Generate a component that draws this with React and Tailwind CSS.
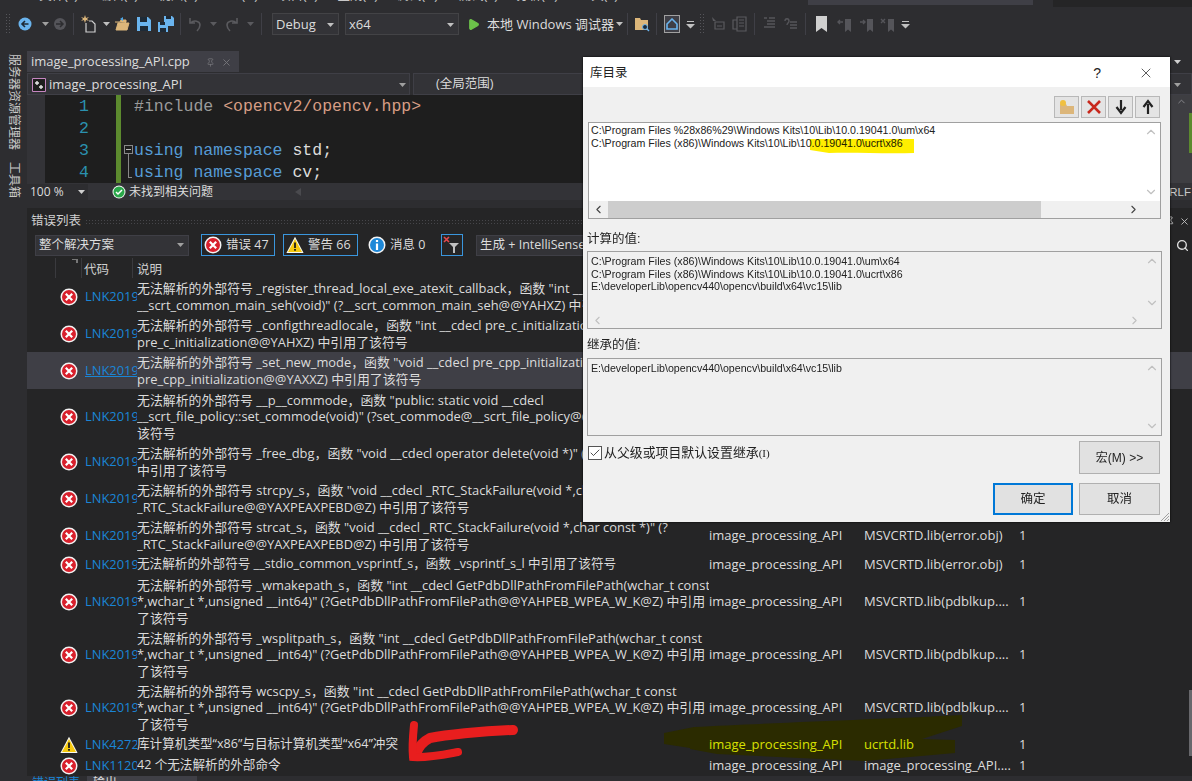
import React from "react";
import { ChevronUp, ChevronDown, ChevronLeft, ChevronRight, Search, Pin, X, Play, Check } from "lucide-react";

const ui = { fontFamily: '"Open Sans","Noto Sans CJK SC",sans-serif' };
const dlg = { fontFamily: '"Liberation Sans","Noto Sans CJK SC",sans-serif' };
const mono = { fontFamily: '"Liberation Mono","Noto Sans CJK SC",monospace' };

const ErrorIcon = ({ s = 18 }) => (
  <svg width={s} height={s} viewBox="0 0 18 18" className="shrink-0">
    <circle cx="9" cy="9" r="8.5" fill="#f4f4f4" />
    <circle cx="9" cy="9" r="7" fill="#d8202c" />
    <path d="M5.8 5.8l6.4 6.4M12.2 5.8l-6.4 6.4" stroke="#fff" strokeWidth="2.2" />
  </svg>
);
const WarnIcon = ({ s = 18 }) => (
  <svg width={s} height={s} viewBox="0 0 18 18" className="shrink-0">
    <path d="M9 .8L17.6 17H.4z" fill="#f8f8f0" />
    <path d="M9 3L16 16H2z" fill="#f6c90e" />
    <path d="M9 6.5v5.5M9 13v1.8" stroke="#1e1e1e" strokeWidth="1.8" />
  </svg>
);
const InfoIcon = () => (
  <svg width="18" height="18" viewBox="0 0 18 18" className="shrink-0">
    <circle cx="9" cy="9" r="8.5" fill="#f4f4f4" />
    <circle cx="9" cy="9" r="7" fill="#1e88d8" />
    <path d="M9 4v2M9 7.5V14" stroke="#fff" strokeWidth="2.2" />
  </svg>
);
const Caret = ({ c = "#a0a0a0" }) => (
  <svg width="7" height="4" viewBox="0 0 7 4" className="shrink-0"><path d="M0 0h7L3.5 4z" fill={c} /></svg>
);
const Sep = () => <div className="mx-[3px] h-[22px] w-px shrink-0 bg-[#3f3f46]" />;
const Grip = () => (
  <div className="h-[22px] w-[5px] shrink-0 bg-[radial-gradient(#55555a_1px,transparent_1px)] bg-[length:3px_3px]" />
);
const Overflow = () => (
  <svg width="9" height="9" viewBox="0 0 9 9" className="shrink-0"><path d="M1 1h7v1H1zM0 4h9L4.5 8.5z" fill="#c0c0c0" /></svg>
);
const Slot = ({ w, children }) => (
  <div className="flex h-[22px] shrink-0 items-center justify-center" style={{ width: w }}>{children}</div>
);

const FolderOpen = () => (
  <svg width="16" height="16" viewBox="0 0 16 16"><path d="M1 6h5l1-2h5v3H4l-2 7h11l2-7h-2" fill="#dcb67a" stroke="#dcb67a" /><path d="M6 3l3-2v4z" fill="#4fa8e8" /></svg>
);
const Save = () => (
  <svg width="14" height="14" viewBox="0 0 14 14"><path d="M0 0h11l3 3v11H0z" fill="#6ab4ee" /><path d="M3 0h7v5H3zM3 9h8v5H3z" fill="#1e2a36" /></svg>
);
const SaveAll = () => (
  <svg width="16" height="16" viewBox="0 0 16 16"><path d="M6 0h8l2 2v8H6z" fill="#6ab4ee" /><path d="M8 0h5v3H8z" fill="#1e2a36" /><path d="M0 6h8l2 2v8H0z" fill="#6ab4ee" /><path d="M2 6h5v3H2zM2 12h6v4H2z" fill="#1e2a36" /></svg>
);
const Undo = ({ flip }) => (
  <svg width="15" height="15" viewBox="0 0 15 15" className={flip ? "-scale-x-100" : ""}><path d="M2 1v5h5M2.5 6C6 2.5 12 4 12 8c0 2-1 4-3 6" fill="none" stroke="#5a5a5e" strokeWidth="1.6" /></svg>
);

const rows = [
  ["e", ['无法解析的外部符号 _register_thread_local_exe_atexit_callback，函数 "int __cdecl', '__scrt_common_main_seh(void)" (?__scrt_common_main_seh@@YAHXZ) 中引用了该符号'], "MSVCRTD.lib(exe_main.obj)"],
  ["e", ['无法解析的外部符号 _configthreadlocale，函数 "int __cdecl pre_c_initialization(void)" (?', 'pre_c_initialization@@YAHXZ) 中引用了该符号'], "MSVCRTD.lib(exe_main.obj)"],
  ["e", ['无法解析的外部符号 _set_new_mode，函数 "void __cdecl pre_cpp_initialization(void)" (?', 'pre_cpp_initialization@@YAXXZ) 中引用了该符号'], "MSVCRTD.lib(exe_main.obj)", true],
  ["e", ['无法解析的外部符号 __p__commode，函数 "public: static void __cdecl', '__scrt_file_policy::set_commode(void)" (?set_commode@__scrt_file_policy@@SAXXZ) 中引用了', '该符号'], "MSVCRTD.lib(exe_main.obj)", false, true],
  ["e", ['无法解析的外部符号 _free_dbg，函数 "void __cdecl operator delete(void *)" (??3@YAXPEAX@Z)', '中引用了该符号'], "MSVCRTD.lib(delete.obj)"],
  ["e", ['无法解析的外部符号 strcpy_s，函数 "void __cdecl _RTC_StackFailure(void *,char const *)" (?', '_RTC_StackFailure@@YAXPEAXPEBD@Z) 中引用了该符号'], "MSVCRTD.lib(error.obj)"],
  ["e", ['无法解析的外部符号 strcat_s，函数 "void __cdecl _RTC_StackFailure(void *,char const *)" (?', '_RTC_StackFailure@@YAXPEAXPEBD@Z) 中引用了该符号'], "MSVCRTD.lib(error.obj)"],
  ["e", ['无法解析的外部符号 __stdio_common_vsprintf_s，函数 _vsprintf_s_l 中引用了该符号'], "MSVCRTD.lib(error.obj)"],
  ["e", ['无法解析的外部符号 _wmakepath_s，函数 "int __cdecl GetPdbDllPathFromFilePath(wchar_t const', '*,wchar_t *,unsigned __int64)" (?GetPdbDllPathFromFilePath@@YAHPEB_WPEA_W_K@Z) 中引用', '了该符号'], "MSVCRTD.lib(pdblkup...."],
  ["e", ['无法解析的外部符号 _wsplitpath_s，函数 "int __cdecl GetPdbDllPathFromFilePath(wchar_t const', '*,wchar_t *,unsigned __int64)" (?GetPdbDllPathFromFilePath@@YAHPEB_WPEA_W_K@Z) 中引用', '了该符号'], "MSVCRTD.lib(pdblkup...."],
  ["e", ['无法解析的外部符号 wcscpy_s，函数 "int __cdecl GetPdbDllPathFromFilePath(wchar_t const', '*,wchar_t *,unsigned __int64)" (?GetPdbDllPathFromFilePath@@YAHPEB_WPEA_W_K@Z) 中引用', '了该符号'], "MSVCRTD.lib(pdblkup...."],
  ["w", ['库计算机类型“x86”与目标计算机类型“x64”冲突'], "ucrtd.lib"],
  ["e", ['42 个无法解析的外部命令'], "image_processing_API...."],
];
const rowH = { 1: "h-[21px]", 2: "h-[37px]", 3: "h-[53px]" };

function Row({ r }) {
  const [kind, lines, file, selected, nudge] = r;
  const warn = kind === "w";
  const code = warn ? "LNK4272" : lines.length === 1 && file.startsWith("image") ? "LNK1120" : "LNK2019";
  return (
    <div className={`relative z-10 flex items-center text-[12.9px] text-[#dcdcdc] ${rowH[lines.length]} ${selected ? "bg-[#3f3f46]" : ""} ${nudge ? "mt-[1px]" : ""}`}>
      <div className="flex w-[51px] shrink-0 justify-end">
        <div className="flex w-[18px] justify-center">{warn ? <WarnIcon /> : <ErrorIcon />}</div>
      </div>
      <div className={`w-[59px] shrink-0 overflow-hidden whitespace-nowrap pl-[7px] text-[#1a85d6] ${selected ? "underline" : ""}`}>{code}</div>
      <div className={`w-[572px] shrink-0 overflow-hidden leading-[16.5px] ${lines.length === 1 ? "text-[12.6px]" : ""}`}>
        {lines.map((l, i) => <div key={i} className="whitespace-nowrap">{l}</div>)}
      </div>
      <div className={`w-[155px] shrink-0 text-[13px] ${warn ? "text-[#d8e000]" : ""}`}>image_processing_API</div>
      <div className={`w-[155px] shrink-0 overflow-hidden whitespace-nowrap text-[13px] ${warn ? "text-[#d8e000]" : ""}`}>{file}</div>
      <div>1</div>
    </div>
  );
}

const ToolBtn = ({ children }) => (
  <div className="flex h-[22px] w-[25px] items-center justify-center border border-[#b8b8b8] bg-[#e4e4e4]">{children}</div>
);
const VBar = () => (
  <div className="flex w-[18px] shrink-0 flex-col items-center justify-between bg-[#f0f0f0] py-[2px]">
    <ChevronUp size={14} className="text-[#c0c0c0]" />
    <ChevronDown size={14} className="text-[#c0c0c0]" />
  </div>
);

function Dialog() {
  return (
    <div className="absolute left-[583px] top-[57px] z-30 flex h-[465px] w-[587px] flex-col bg-[#f0f0f0] text-[#222] shadow-[0_0_2px_#000]" style={dlg}>
      <div className="flex h-[30px] shrink-0 items-center bg-white pl-[7px] pt-[2px] text-[12.5px]">
        <span className="flex-1">库目录</span>
        <span className="mr-[37px] text-[14px]">?</span>
        <X size={16} strokeWidth={1.2} className="mr-[16px] text-[#333]" />
      </div>
      <div className="flex justify-end gap-[2px] pr-[10px] pt-[9px]">
        <ToolBtn>
          <svg width="18" height="16" viewBox="0 0 18 16"><path d="M2 5h6l1 2h7v8H2z" fill="#dcb67a" /><circle cx="5" cy="4" r="3" fill="#f0c040" /></svg>
        </ToolBtn>
        <ToolBtn>
          <svg width="16" height="16" viewBox="0 0 16 16"><path d="M2 2l12 12M14 2L2 14" stroke="#c8281c" strokeWidth="2.6" /></svg>
        </ToolBtn>
        <ToolBtn>
          <svg width="14" height="16" viewBox="0 0 14 16"><path d="M7 1v10M2.5 8L7 14l4.5-6" fill="none" stroke="#222" strokeWidth="2.2" /></svg>
        </ToolBtn>
        <ToolBtn>
          <svg width="14" height="16" viewBox="0 0 14 16"><path d="M7 15V5M2.5 8L7 2l4.5 6" fill="none" stroke="#222" strokeWidth="2.2" /></svg>
        </ToolBtn>
      </div>
      <div className="relative ml-[5px] mr-[9px] mt-[4px] flex h-[97px] flex-col border border-[#a0a0a0] bg-white">
        <div className="flex min-h-0 flex-1">
          <div className="flex-1 pl-[2px] pt-[1px] text-[10.65px] leading-[13px]">
            <div>C:\Program Files %28x86%29\Windows Kits\10\Lib\10.0.19041.0\um\x64</div>
            <div>C:\Program Files (x86)\Windows Kits\10\Lib\10.0.19041.0\ucrt\x86</div>
          </div>
          <div className="flex w-[18px] shrink-0 flex-col items-center justify-between py-[2px]">
            <ChevronUp size={14} className="text-[#c0c0c0]" />
            <ChevronDown size={14} className="text-[#c0c0c0]" />
          </div>
        </div>
        <div className="flex h-[17px] shrink-0 items-center bg-[#f0f0f0]">
          <ChevronLeft size={13} className="mx-[3px] shrink-0 text-[#444]" />
          <div className="h-full w-[433px] bg-[#cdcdcd]" />
          <div className="flex-1" />
          <ChevronRight size={13} className="mr-[20px] shrink-0 text-[#444]" />
        </div>
        <svg className="pointer-events-none absolute left-[220px] top-[13px] mix-blend-multiply" width="108" height="18" viewBox="0 0 108 18">
          <path d="M1 3h104v14c-30 1-60-1-85 0L1 14z" fill="#ffee00" />
        </svg>
      </div>
      <div className="pl-[4px] pt-[11px] text-[12.5px] leading-[18px]">计算的值:</div>
      <div className="ml-[4px] mr-[8px] mt-[3px] flex h-[78px] flex-col border border-[#a0a0a0] bg-[#f0f0f0]">
        <div className="flex min-h-0 flex-1">
          <div className="flex-1 pl-[3px] pt-[3px] text-[10.65px] leading-[12.5px]">
            <div>C:\Program Files (x86)\Windows Kits\10\Lib\10.0.19041.0\um\x64</div>
            <div>C:\Program Files (x86)\Windows Kits\10\Lib\10.0.19041.0\ucrt\x86</div>
            <div>E:\developerLib\opencv440\opencv\build\x64\vc15\lib</div>
          </div>
          <VBar />
        </div>
        <div className="flex h-[16px] shrink-0 items-center">
          <ChevronLeft size={13} className="mx-[3px] shrink-0 text-[#c0c0c0]" />
          <div className="flex-1" />
          <ChevronRight size={13} className="mr-[20px] shrink-0 text-[#c0c0c0]" />
        </div>
      </div>
      <div className="pl-[4px] pt-[7px] text-[12.5px] leading-[18px]">继承的值:</div>
      <div className="ml-[4px] mr-[8px] mt-[4px] flex h-[78px] border border-[#a0a0a0] bg-[#f0f0f0]">
        <div className="flex-1 pl-[3px] pt-[3px] text-[10.65px] leading-[12.5px]">E:\developerLib\opencv440\opencv\build\x64\vc15\lib</div>
        <VBar />
      </div>
      <div className="flex items-start pl-[5px] pr-[10px] pt-[5px]">
        <div className="mt-[5px] flex h-[14px] w-[14px] items-center justify-center border border-[#555] bg-white">
          <Check size={12} strokeWidth={1.6} className="text-[#222]" />
        </div>
        <div className="ml-[2px] mt-[3px] flex-1 text-[12.9px] leading-[18px]">从父级或项目默认设置继承<span className="text-[11px]" style={{ fontFamily: '"Liberation Serif",serif' }}>(I)</span></div>
        <div className="flex h-[33px] w-[81px] items-center justify-center border border-[#b0b0b0] bg-[#e1e1e1] text-[12px]">宏(M) &gt;&gt;</div>
      </div>
      <div className="flex justify-end gap-[6px] pr-[10px] pt-[9px]">
        <div className="flex h-[32px] w-[80px] items-center justify-center border-2 border-[#0078d7] bg-[#e1e1e1] text-[12.5px]">确定</div>
        <div className="flex h-[32px] w-[81px] items-center justify-center border border-[#b0b0b0] bg-[#e1e1e1] text-[12.5px]">取消</div>
      </div>
      <svg className="absolute bottom-[1px] right-[1px]" width="9" height="9" viewBox="0 0 9 9"><path d="M9 1L1 9M9 4L4 9M9 7L7 9" stroke="#a0a0a0" /></svg>
    </div>
  );
}

export default function App() {
  return (
    <div className="relative flex h-[781px] w-[1192px] flex-col overflow-hidden bg-[#2d2d30] text-[#dcdcdc]" style={ui}>
      {/* menu strip */}
      <div className="flex h-[7px] shrink-0 items-start overflow-hidden pl-[18px] text-[12.5px] leading-[14px] text-[#c8c8c8]">
        {["文件(F)", "编辑(E)", "视图(V)", "Git(G)", "项目(P)", "生成(B)", "调试(D)", "测试(S)", "分析(N)", "工具(T)"].map((m) => (
          <div key={m} className="-mt-[11px] flex w-[60px] shrink-0 justify-end whitespace-nowrap">{m}</div>
        ))}
        <div className="ml-[190px] h-[5px] w-[225px] shrink-0 bg-[#3f3f46]" />
        <div className="ml-[20px] h-[7px] flex-1 bg-[#252526]" />
      </div>

      {/* toolbar */}
      <div className="mt-[6px] flex h-[22px] shrink-0 items-center pl-[5px]">
        <Grip />
        <Slot w={30}>
          <svg width="16" height="16" viewBox="0 0 16 16"><circle cx="8" cy="8" r="6.5" fill="#6ab4ee" /><path d="M11.5 8h-6M8 5L5 8l3 3" fill="none" stroke="#1e2a36" strokeWidth="1.6" /></svg>
        </Slot>
        <Slot w={10}><Caret /></Slot>
        <Slot w={20}>
          <svg width="14" height="14" viewBox="0 0 14 14"><circle cx="7" cy="7" r="6" fill="#55555a" /><path d="M3 7h7M7 4l3 3-3 3" fill="none" stroke="#2d2d30" strokeWidth="1.5" /></svg>
        </Slot>
        <Sep />
        <Slot w={24}>
          <svg width="17" height="18" viewBox="0 0 17 18"><path d="M5 8v9h9V9l-3-3H8" fill="none" stroke="#d0d0d0" strokeWidth="1.2" /><path d="M4 0l1 3 3-1-2 2 2 2-3-1-1 3-1-3-3 1 2-2-2-2 3 1z" fill="#dcb67a" /></svg>
        </Slot>
        <Slot w={10}><Caret c="#c0c0c0" /></Slot>
        <Slot w={22}><FolderOpen /></Slot>
        <Slot w={22}><Save /></Slot>
        <Slot w={22}><SaveAll /></Slot>
        <Sep />
        <Slot w={22}><Undo /></Slot>
        <Slot w={14}><Caret c="#5a5a5e" /></Slot>
        <Slot w={22}><Undo flip /></Slot>
        <Slot w={16}><Caret c="#5a5a5e" /></Slot>
        <Sep />
        <div className="ml-[7px] flex h-[22px] w-[67px] shrink-0 items-center justify-between border border-[#434346] bg-[#333337] pl-[3px] pr-[4px] pt-[1px] text-[13px]">Debug<Caret c="#c0c0c0" /></div>
        <div className="ml-[6px] flex h-[22px] w-[114px] shrink-0 items-center justify-between border border-[#434346] bg-[#333337] pl-[3px] pr-[4px] pt-[1px] text-[13px]">x64<Caret c="#c0c0c0" /></div>
        <Slot w={28}><Play size={13} className="fill-[#6cc24a] text-[#6cc24a]" /></Slot>
        <div className="w-[127px] shrink-0 whitespace-nowrap pt-[1px] text-[13px]">本地 Windows 调试器</div>
        <Slot w={10}><Caret c="#c0c0c0" /></Slot>
        <Sep />
        <Slot w={22}>
          <svg width="16" height="16" viewBox="0 0 16 16"><path d="M1 2h5l1 2h7v10H1z" fill="#dcb67a" /><circle cx="11" cy="11" r="2.5" fill="#1e2a36" stroke="#6ab4ee" /><path d="M13 13l2 2" stroke="#6ab4ee" strokeWidth="1.5" /></svg>
        </Slot>
        <Sep />
        <Slot w={24}>
          <div className="flex h-[18px] w-[16px] items-center justify-center border border-[#a0a0a0] bg-[#3f3f46]">
            <svg width="12" height="12" viewBox="0 0 12 12"><path d="M6 1L1 6v5h10V6z" fill="none" stroke="#6ab4ee" strokeWidth="1.6" /></svg>
          </div>
        </Slot>
        <Slot w={12}><Overflow /></Slot>
        <Slot w={11}><Grip /></Slot>
        <Slot w={22}>
          <svg width="16" height="16" viewBox="0 0 16 16"><path d="M2 1l4 4H3z" fill="#5a5a5e" /><path d="M5 6h9v7H5z" fill="none" stroke="#5a5a5e" strokeWidth="1.2" /><path d="M7 10h5" stroke="#5a5a5e" /></svg>
        </Slot>
        <Slot w={22}>
          <svg width="16" height="16" viewBox="0 0 16 16"><path d="M5 1h9v14H5zM1 4h4v9H1z" fill="none" stroke="#5a5a5e" strokeWidth="1.2" /><path d="M7 4h5M7 7h5M7 10h5" stroke="#5a5a5e" /></svg>
        </Slot>
        <Sep />
        <Slot w={22}>
          <svg width="14" height="14" viewBox="0 0 14 14"><path d="M2 1h3M7 1h6M5 4h8M5 7h8M2 10h11" stroke="#55555a" strokeWidth="1.4" /></svg>
        </Slot>
        <Slot w={22}>
          <svg width="14" height="14" viewBox="0 0 14 14"><path d="M1 4c0-3 4-3 4 0 0 2-2 2-2 4M6 5h7M6 8h7M6 11h7" fill="none" stroke="#55555a" strokeWidth="1.4" /></svg>
        </Slot>
        <Sep />
        <Slot w={24}><svg width="13" height="16" viewBox="0 0 13 16"><path d="M1 0h11v16l-5.5-4L1 16z" fill="#d0d0d0" /></svg></Slot>
        <Slot w={22}>
          <svg width="15" height="15" viewBox="0 0 15 15"><path d="M8 2h6v13l-3-2.5L8 15z" fill="#55555a" /><path d="M6 5H1M3 3L1 5l2 2" fill="none" stroke="#55555a" strokeWidth="1.4" /></svg>
        </Slot>
        <Slot w={22}>
          <svg width="15" height="15" viewBox="0 0 15 15"><path d="M8 2h6v13l-3-2.5L8 15z" fill="#55555a" /><path d="M1 5h5M4 3l2 2-2 2" fill="none" stroke="#55555a" strokeWidth="1.4" /></svg>
        </Slot>
        <Slot w={20}>
          <svg width="15" height="15" viewBox="0 0 15 15"><path d="M8 2h6v13l-3-2.5L8 15z" fill="#55555a" /><path d="M1 2l4 4M5 2L1 6" stroke="#55555a" strokeWidth="1.4" /></svg>
        </Slot>
        <Slot w={16}><Overflow /></Slot>
      </div>

      <div className="mt-[16px] flex min-h-0 flex-1">
        {/* side rail */}
        <div className="flex w-[27px] shrink-0 flex-col items-center gap-[12px] pt-[3px] text-[12px] leading-[14px] text-[#c8c8c8]">
          <div className="whitespace-nowrap [text-orientation:sideways] [writing-mode:vertical-rl]">服务器资源管理器</div>
          <div className="whitespace-nowrap [text-orientation:sideways] [writing-mode:vertical-rl]">工具箱</div>
        </div>

        <div className="flex min-w-0 flex-1 flex-col">
          {/* doc tab */}
          <div className="flex h-[21px] shrink-0 items-center">
            <div className="flex h-full w-[212px] items-center bg-[#3f3f46] pl-[4px] pt-[1px] text-[13px]">
              <span className="flex-1 whitespace-nowrap">image_processing_API.cpp</span>
              <Pin size={9} className="mr-[6px] text-[#77777c]" />
              <X size={11} className="mr-[7px] text-[#77777c]" />
            </div>
            <div className="flex-1" />
            <div className="pr-[11px]"><Caret c="#d0d0d0" /></div>
          </div>
          {/* nav bar */}
          <div className="flex h-[23px] shrink-0 items-center gap-[3px] bg-[#2d2d30]">
            <div className="flex h-[22px] w-[383px] shrink-0 items-center border border-[#3f3f46] bg-[#333337] pl-[4px] pr-[3px] pt-[2px] text-[13px]">
              <svg width="14" height="14" viewBox="0 0 14 14" className="mr-[3px] shrink-0"><path d="M.5.5h13v13H.5z" fill="#1e1e1e" stroke="#c586c0" /><path d="M3 5h4M5 3v4M7 9h4M9 7v4" stroke="#e8e8e8" strokeWidth="1.4" /></svg>
              <span className="flex-1">image_processing_API</span>
              <Caret />
            </div>
            <div className="flex h-[22px] flex-1 items-center justify-between border border-[#3f3f46] bg-[#333337] pl-[22px] pr-[10px] pt-[2px] text-[12.5px]">(全局范围)<Caret c="#a0a0a0" /></div>
          </div>
          {/* editor */}
          <div className="flex h-[88px] shrink-0 overflow-hidden bg-[#1e1e1e] text-[16.5px] leading-[22px]" style={mono}>
            <div className="w-[18px] shrink-0 bg-[#333337]" />
            <div className="w-[71px] shrink-0 pt-[1px]">
              {[1, 2, 3, 4].map((n) => (
                <div key={n} className="pr-[27px] text-right text-[#2b91af]">{n}</div>
              ))}
            </div>
            <div className="w-[5px] shrink-0 bg-[#5c8a2e]" />
            <div className="relative flex-1 whitespace-pre pl-[13px] pt-[1px]">
              <div><span className="text-[#9b9b9b]">#include </span><span className="text-[#d69d85]">&lt;opencv2/opencv.hpp&gt;</span></div>
              <div>&nbsp;</div>
              <div><span className="text-[#569cd6]">using namespace </span><span className="text-[#dcdcdc]">std;</span></div>
              <div><span className="text-[#569cd6]">using namespace </span><span className="text-[#dcdcdc]">cv;</span></div>
              <div className="absolute left-[3px] top-[50px] flex h-[9px] w-[9px] items-center justify-center border border-[#888]"><div className="h-px w-[5px] bg-[#bbb]" /></div>
              <div className="absolute left-[7px] top-[59px] h-[24px] w-[4px] border-b border-l border-[#888]" />
            </div>
            <div className="flex w-[22px] shrink-0 flex-col items-center bg-[#3e3e42] pt-[1px]">
              <ChevronUp size={11} className="text-[#8a8a8e]" />
              <div className="mt-[6px] h-[40px] w-[3px] self-end bg-[#5c8a2e]" />
            </div>
          </div>
          {/* status */}
          <div className="flex h-[17px] shrink-0 items-center bg-[#333337] pt-[1px] text-[12px]">
            <div className="flex h-[17px] w-[61px] shrink-0 items-center justify-between bg-[#2d2d30] pl-[3px] pr-[3px]">100 %<Caret c="#d0d0d0" /></div>
            <svg width="14" height="14" viewBox="0 0 14 14" className="ml-[24px] shrink-0"><circle cx="7" cy="7" r="6.5" fill="#f4f4f4" /><circle cx="7" cy="7" r="5.5" fill="#2aa84a" /><path d="M4 7l2 2 4-4" fill="none" stroke="#fff" strokeWidth="1.5" /></svg>
            <span className="ml-[3px]">未找到相关问题</span>
            <svg width="6" height="8" viewBox="0 0 6 8" className="ml-[82px] shrink-0"><path d="M6 0v8L0 4z" fill="#4a4a4e" /></svg>
            <div className="flex-1" />
            <div className="pr-[1px] text-[11.5px] leading-[14px] text-[#c8c8c8]" style={dlg}>CRLF</div>
          </div>

          {/* error list */}
          <div className="relative mt-[8px] flex min-h-0 flex-1 flex-col bg-[#252526]">
            <div className="flex h-[25px] shrink-0 items-center pl-[4px] pt-[1px] text-[12.5px] text-[#d0d0d0]">
              错误列表
              <div className="ml-[4px] h-[5px] flex-1 bg-[radial-gradient(#46464a_1px,transparent_1px)] bg-[length:3px_3px]" />
              <Pin size={11} className="ml-[4px] mr-[4px] shrink-0 text-[#c0c0c0]" />
              <X size={11} className="mr-[2px] shrink-0 text-[#c0c0c0]" />
            </div>
            <div className="flex h-[24px] shrink-0 items-center text-[13px]">
              <div className="ml-[8px] flex h-[21px] w-[154px] shrink-0 items-center justify-between border border-[#3f3f46] bg-[#333337] pl-[3px] pr-[4px] text-[12.5px]">整个解决方案<Caret /></div>
              <div className="ml-[12px] flex h-[22px] w-[74px] shrink-0 items-center gap-[4px] border border-[#3a96dd] pl-[2px] text-[12.5px]"><ErrorIcon />错误 47</div>
              <div className="ml-[8px] flex h-[22px] w-[75px] shrink-0 items-center gap-[4px] border border-[#3a96dd] pl-[2px] text-[12.5px]"><WarnIcon />警告 66</div>
              <div className="ml-[10px] flex h-[22px] w-[60px] shrink-0 items-center gap-[4px] text-[12.5px]"><InfoIcon />消息 0</div>
              <div className="ml-[13px] flex h-[22px] w-[22px] shrink-0 items-center justify-center border border-[#3a96dd]">
                <svg width="18" height="18" viewBox="0 0 18 18"><path d="M1 1l5 5M6 1L1 6" stroke="#e5484d" strokeWidth="1.6" /><path d="M6 7h10l-4 4v6h-2v-6z" fill="#c0c0c0" /></svg>
              </div>
              <div className="ml-[13px] flex h-[21px] w-[160px] shrink-0 items-center overflow-hidden whitespace-nowrap border border-[#3f3f46] bg-[#333337] pl-[3px] text-[12.5px]">生成 + IntelliSense</div>
              <div className="flex-1" />
              <Search size={13} strokeWidth={2.5} className="mr-[3px] shrink-0 text-[#e0e0e0]" />
            </div>
            <div className="mt-[1px] flex h-[20px] shrink-0 items-start text-[12.5px] text-[#d0d0d0]">
              <div className="h-full w-[28px] shrink-0" />
              <div className="flex h-full w-[27px] shrink-0 justify-end border-l border-r border-[#3a3a3e] pr-[3px] pt-[1px]">
                <svg width="6" height="6" viewBox="0 0 6 6"><path d="M0 0h6v4H4V1H0z" fill="#777" /></svg>
              </div>
              <div className="flex h-full w-[51px] shrink-0 items-center border-r border-[#3a3a3e] pl-[2px] pt-[4px]">代码</div>
              <div className="flex h-full items-center pl-[4px] pt-[4px]">说明</div>
            </div>
            <div className="relative min-h-0 flex-1 overflow-hidden">
              <svg className="absolute left-[610px] top-[437px] z-0" width="330" height="60" viewBox="0 0 330 60">
                <path d="M27 18L57 12C130 8 250 4 325 0V11L285 24 318 25V38L228 46 80 39 53 34V33L27 29z" fill="#2b2b00" />
              </svg>
              {rows.map((r, i) => <Row key={i} r={r} />)}
              <div className="absolute right-0 top-[412px] z-20 h-[66px] w-[3px] bg-[#68686c]" />
            </div>
            <div className="flex h-[5px] shrink-0 overflow-hidden bg-[#2d2d30] text-[12px] leading-[14px]">
              <div className="w-[60px] shrink-0 pl-[5px] text-[#1a85d6]">错误列表</div>
              <div className="w-[110px] shrink-0 bg-[#3f3f46] pl-[6px]">输出</div>
            </div>
          </div>
        </div>
      </div>

      <Dialog />

      {/* hand drawn arrow */}
      <svg className="pointer-events-none absolute left-0 top-0 z-20" width="1192" height="781" viewBox="0 0 1192 781">
        <path d="M513 730C480 731 445 735 430 738C422 742 418 748 416 754" fill="none" stroke="#e81e1e" strokeWidth="10" strokeLinecap="round" />
        <path d="M414 725C413 735 412 748 413 757C428 758 442 755 458 752" fill="none" stroke="#e81e1e" strokeWidth="8" strokeLinecap="round" />
      </svg>
    </div>
  );
}
